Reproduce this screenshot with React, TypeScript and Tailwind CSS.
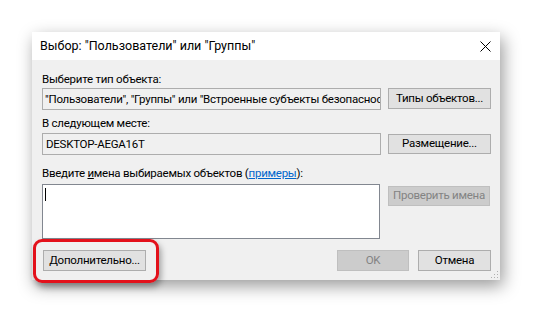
import React from 'react';

function Btn({
  children,
  disabled = false,
  className = '',
}: {
  children: React.ReactNode;
  disabled?: boolean;
  className?: string;
}) {
  return (
    <div
      className={
        'flex items-center justify-center border whitespace-nowrap ' +
        (disabled
          ? 'bg-[#cccccc] border-[#bfbfbf] text-[#838383] '
          : 'bg-[#e1e1e1] border-[#adadad] text-black ') +
        className
      }
    >
      {children}
    </div>
  );
}

export default function App() {
  return (
    <div className="relative w-[533px] h-[312px] bg-white font-['Roboto',Arial,sans-serif] text-[11.5px] tracking-[-0.25px] text-black">
      <div className="pl-[32px] pt-[32px]">
        <div className="w-[468px] h-[248px] bg-[#f0f0f0] flex flex-col relative shadow-[3px_6px_16px_rgba(0,0,0,0.4)]">
          {/* title bar */}
          <div className="h-[28px] bg-white flex items-center justify-between pl-[8px] pr-[9px]">
            <span className="pt-[1px] text-[12.5px] tracking-normal">Выбор: "Пользователи" или "Группы"</span>
            <svg width="11" height="11" viewBox="0 0 11 11">
              <path d="M0.5 0.5 L10.5 10.5 M10.5 0.5 L0.5 10.5" stroke="#000" strokeWidth="1" fill="none" />
            </svg>
          </div>

          {/* body */}
          <div className="flex-1 flex flex-col pl-[10px] pr-[9px]">
            <div className="mt-[11px] h-[16px] leading-[16px]">Выберите тип объекта:</div>
            <div className="mt-[1px] flex gap-[7px] h-[22px]">
              <div className="w-[339px] h-[22px] border border-[#adadad] bg-[#f0f0f0] overflow-hidden whitespace-nowrap pl-[2px] leading-[20px]">
                "Пользователи", "Группы" или "Встроенные субъекты безопасности"
              </div>
              <Btn className="w-[103px] h-[21px]">Типы объектов...</Btn>
            </div>

            <div className="mt-[5px] h-[16px] leading-[16px]">В следующем месте:</div>
            <div className="mt-[2px] flex gap-[7px] h-[22px]">
              <div className="w-[339px] h-[22px] border border-[#adadad] bg-[#f0f0f0] overflow-hidden whitespace-nowrap pl-[3px] leading-[20px]">
                DESKTOP-AEGA16T
              </div>
              <Btn className="w-[103px] h-[20px] mt-[1px]">Размещение...</Btn>
            </div>

            <div className="mt-[10px] h-[16px] leading-[16px]">
              Введите <span className="underline">и</span>мена выбираемых объектов (
              <span className="text-[#0066cc] underline">примеры</span>):
            </div>
            <div className="mt-[3px] flex">
              <div className="w-[338px] h-[55px] bg-white border border-[#828790] relative">
                <div className="absolute left-[2px] top-[3px] w-[1px] h-[13px] bg-black" />
              </div>
              <Btn disabled className="ml-[8px] mt-[2px] w-[102px] h-[20px]">
                Проверить имена
              </Btn>
            </div>

            <div className="mt-[11px] flex items-start">
              <Btn className="ml-[1px] w-[103px] h-[21px]">Дополнительно...</Btn>
              <div className="flex-1" />
              <Btn disabled className="w-[72px] h-[21px]">
                OK
              </Btn>
              <Btn className="ml-[9px] w-[73px] h-[21px]">Отмена</Btn>
            </div>
          </div>

          {/* resize grip */}
          <svg width="8" height="8" viewBox="0 0 8 8" className="absolute right-[1px] bottom-[1px]">
            <rect x="6" y="0" width="1" height="1" fill="#b0b0b0" />
            <rect x="3" y="3" width="1" height="1" fill="#b0b0b0" />
            <rect x="6" y="3" width="1" height="1" fill="#b0b0b0" />
            <rect x="0" y="6" width="1" height="1" fill="#b0b0b0" />
            <rect x="3" y="6" width="1" height="1" fill="#b0b0b0" />
            <rect x="6" y="6" width="1" height="1" fill="#b0b0b0" />
          </svg>
        </div>
      </div>

      {/* red highlight annotation */}
      <div className="absolute left-[33px] top-[239px] w-[126px] h-[44px] border-[3px] border-[#e3111b] rounded-[9px] shadow-[2px_4px_6px_rgba(0,0,0,0.35)]" />
    </div>
  );
}
